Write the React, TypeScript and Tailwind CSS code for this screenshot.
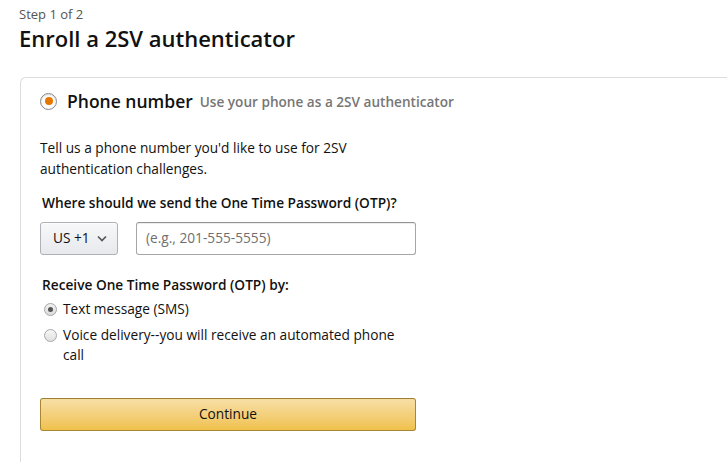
import React from "react";

export default function App() {
  return (
    <div className="w-[727px] h-[462px] overflow-hidden bg-white text-[#111] font-['Open_Sans',sans-serif]">
      <div className="pl-[19px] pt-[6px]">
        <div className="text-[13px] leading-[16px] text-[#555]">Step 1 of 2</div>
        <h1 className="mt-[3px] text-[22px] leading-[26px] font-semibold text-[#111]">Enroll a 2SV authenticator</h1>
      </div>
      <div className="ml-[20px] mt-[26px] border-l border-t border-[#ddd] rounded-tl-[6px] h-[400px]">
        <div className="flex items-center pl-[19px] pt-[10px]">
          <span className="w-[17px] h-[17px] rounded-full border border-[#888] bg-white flex items-center justify-center shadow-[inset_0_1px_2px_rgba(0,0,0,0.15)]">
            <span className="w-[8px] h-[8px] rounded-full bg-[#e77600]" />
          </span>
          <span className="ml-[10px] text-[17.5px] font-semibold text-[#111]">Phone number</span>
          <span className="ml-[7px] text-[13.6px] font-semibold text-[#767676] mt-[2px]">Use your phone as a 2SV authenticator</span>
        </div>
        <div className="pl-[19px] pt-[23px] w-[400px] text-[13.7px]">
          <p className="leading-[21px] text-[#111] w-[350px]">Tell us a phone number you'd like to use for 2SV authentication challenges.</p>
          <div className="mt-[14px] font-semibold leading-[20px] pl-[2px]">Where should we send the One Time Password (OTP)?</div>
          <div className="flex mt-[9px] gap-[18px]">
            <div className="w-[78px] h-[33px] rounded-[3px] border border-[#adb1b8] bg-gradient-to-b from-[#f7f8fa] to-[#e7e9ec] flex items-center pl-[12px] text-[#111] shadow-[0_1px_0_rgba(255,255,255,0.6)_inset]">
              <span>US +1</span>
              <svg className="ml-[7px]" width="10" height="7" viewBox="0 0 10 7"><path d="M1 1.5 L5 5.5 L9 1.5" fill="none" stroke="#555" strokeWidth="1.6" /></svg>
            </div>
            <div className="w-[280px] h-[33px] rounded-[3px] border border-[#a6a6a6] border-t-[#949494] flex items-center pl-[9px] text-[#6f6f6f] shadow-[0_1px_0_rgba(0,0,0,0.07)_inset]">
              (e.g., 201-555-5555)
            </div>
          </div>
          <div className="mt-[20px] font-semibold leading-[20px] pl-[2px]">Receive One Time Password (OTP) by:</div>
          <div className="mt-[4px] flex items-start pl-[4px]">
            <span className="mt-[4px] w-[13px] h-[13px] rounded-full border border-[#a6a6a6] bg-gradient-to-b from-[#f2f2f2] to-[#dcdcdc] flex items-center justify-center shrink-0">
              <span className="w-[5px] h-[5px] rounded-full bg-[#555]" />
            </span>
            <span className="ml-[6px] leading-[20px]">Text message (SMS)</span>
          </div>
          <div className="mt-[6px] flex items-start pl-[4px] w-[360px]">
            <span className="mt-[4px] w-[13px] h-[13px] rounded-full border border-[#a6a6a6] bg-gradient-to-b from-[#f7f7f7] to-[#e0e0e0] shrink-0" />
            <span className="ml-[6px] leading-[20px]">Voice delivery--you will receive an automated phone call</span>
          </div>
          <div className="mt-[33px] w-[376px] h-[33px] rounded-[3px] border border-[#a88734] border-t-[#9c7e31] bg-gradient-to-b from-[#f7dfa5] to-[#f0c14b] flex items-center justify-center text-[#111]">
            Continue
          </div>
        </div>
      </div>
    </div>
  );
}
